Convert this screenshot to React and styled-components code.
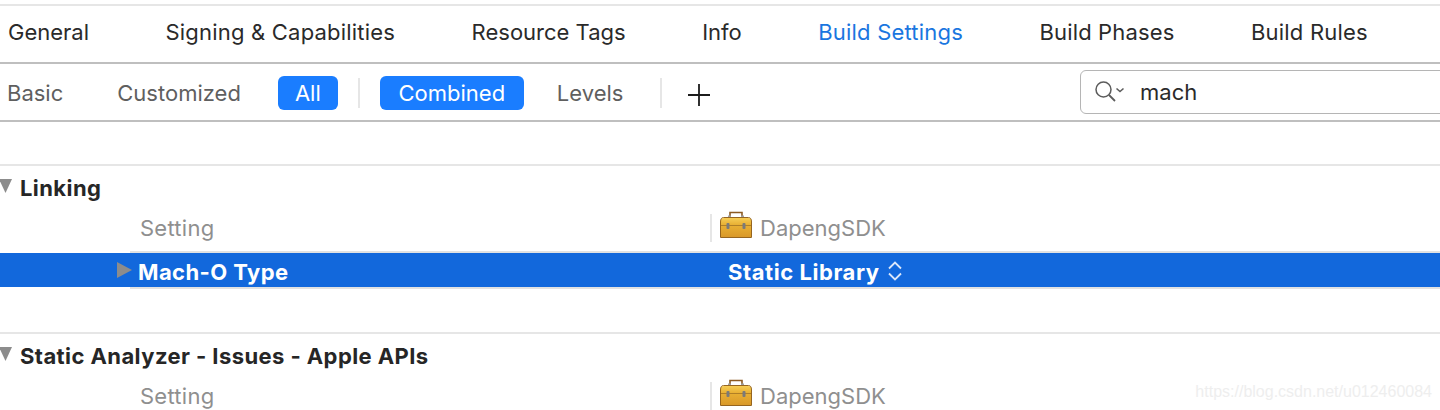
import React from "react";
import styled, { createGlobalStyle } from "styled-components";

const GlobalStyle = createGlobalStyle`
  html, body {
    margin: 0;
    padding: 0;
    background: #fff;
    overflow: hidden;
  }
  body {
    font-family: Inter, "Liberation Sans", sans-serif;
    color: #262626;
  }
`;

const Page = styled.div`
  position: relative;
  width: 1440px;
  height: 410px;
  overflow: hidden;
  background: #fff;
  padding-top: 4px;
  box-sizing: border-box;
`;

const TabBar = styled.div`
  display: flex;
  align-items: center;
  gap: 76.5px;
  height: 56px;
  padding-left: 8px;
  border-top: 2px solid #e6e6e6;
  border-bottom: 2px solid #bfbfbf;
  font-size: 22px;
  white-space: nowrap;
`;

const Tab = styled.div`
  color: ${props => (props.$active ? "#1a76e0" : "#2a2a2a")};
  letter-spacing: ${props => props.$spacing}px;
  margin-top: -5px;
`;

const FilterBar = styled.div`
  display: flex;
  align-items: center;
  height: 56px;
  padding: 2px 0 0 7px;
  box-sizing: border-box;
  font-size: 22px;
  white-space: nowrap;
`;

const FilterRule = styled.div`
  height: 2px;
  background: #bfbfbf;
`;

const FilterText = styled.div`
  color: #5f5f5f;
  margin-left: ${props => props.$left || 0}px;
`;

const Pill = styled.div`
  display: flex;
  align-items: center;
  justify-content: center;
  width: ${props => props.$width}px;
  height: 34px;
  margin-left: ${props => props.$left}px;
  border-radius: 6px;
  background: #1a7dff;
  color: #fff;
`;

const Separator = styled.div`
  width: 2px;
  height: 30px;
  margin-left: ${props => props.$left}px;
  background: #e6e6e6;
`;

const PlusIcon = styled.svg`
  width: 22px;
  height: 22px;
  margin-left: 26px;
  margin-top: 4px;
`;

const SearchBox = styled.div`
  display: flex;
  align-items: center;
  width: 380px;
  height: 44px;
  margin-left: auto;
  margin-right: -20px;
  margin-top: -2px;
  padding-left: 13px;
  box-sizing: border-box;
  border: 1px solid #b5b5b5;
  border-radius: 6px;
  color: #2a2a2a;
`;

const SearchIcon = styled.svg`
  width: 32px;
  height: 24px;
  margin-right: 14px;
`;

const Section = styled.section`
  margin-top: ${props => props.$top}px;
  border-top: 2px solid #e6e6e6;
`;

const SectionHead = styled.div`
  display: flex;
  align-items: center;
  height: 44px;
  font-size: 22px;
  font-weight: 700;
  letter-spacing: 0.42px;
  color: #262626;
  white-space: nowrap;
`;

const Disclosure = styled.svg`
  width: 13px;
  height: 14px;
  margin-left: -1px;
  margin-right: 8px;
  margin-top: -4px;
`;

const ColumnRow = styled.div`
  display: flex;
  align-items: center;
  height: 44px;
  padding-bottom: 8px;
  box-sizing: border-box;
  font-size: 22px;
  color: #8f8f8f;
  white-space: nowrap;
`;

const NameCell = styled.div`
  width: 569px;
  padding-left: 140px;
  letter-spacing: 0.25px;
`;

const ColumnDivider = styled.div`
  width: 2px;
  height: 28px;
  margin-left: 1px;
  background: #e6e6e6;
`;

const Toolbox = styled.svg`
  width: 32px;
  height: 27px;
  margin-left: 8px;
  margin-top: -7px;
`;

const TargetName = styled.div`
  margin-left: 8px;
`;

const SelectedRow = styled.div`
  position: relative;
  display: flex;
  align-items: center;
  height: 34px;
  padding-top: 4px;
  box-sizing: border-box;
  background: #1268dc;
  color: #fff;
  font-size: 22px;
  font-weight: 700;
  letter-spacing: 0.42px;
  white-space: nowrap;
  margin-top: -1px;
  &::before,
  &::after {
    content: "";
    position: absolute;
    left: 130px;
    right: 0;
    height: 2px;
    background: #e2e2e2;
  }
  &::before {
    top: -2px;
  }
  &::after {
    bottom: -2px;
  }
`;

const RowArrow = styled.svg`
  width: 15px;
  height: 16px;
  margin-left: 117px;
  margin-right: 6px;
  margin-top: -4px;
`;

const SettingName = styled.div`
  width: 590px;
`;

const SettingValue = styled.div`
  letter-spacing: 0.56px;
`;

const Stepper = styled.svg`
  width: 14px;
  height: 22px;
  margin-left: 8px;
  margin-top: -3px;
`;

const Watermark = styled.div`
  position: absolute;
  right: 8px;
  bottom: 9px;
  font-family: "Liberation Sans", sans-serif;
  font-size: 16px;
  color: #eeeeee;
`;

const tabs = [
  { label: "General", spacing: 0 },
  { label: "Signing & Capabilities", spacing: 0.2 },
  { label: "Resource Tags", spacing: 0 },
  { label: "Info", spacing: 0 },
  { label: "Build Settings", spacing: 0.2, active: true },
  { label: "Build Phases", spacing: 0.15 },
  { label: "Build Rules", spacing: 0.2 },
];

function DownTriangle() {
  return (
    <Disclosure viewBox="0 0 13 14">
      <path d="M0 0h13L6.500 14z" fill="#8c8c8c" />
    </Disclosure>
  );
}

function ToolboxIcon() {
  return (
    <Toolbox viewBox="0 0 32 27">
      <defs>
        <linearGradient id="lid" x1="0" y1="0" x2="0" y2="1">
          <stop offset="0" stopColor="#f6cd55" />
          <stop offset="1" stopColor="#e6ab2e" />
        </linearGradient>
        <linearGradient id="tray" x1="0" y1="0" x2="0" y2="1">
          <stop offset="0" stopColor="#e8af33" />
          <stop offset="1" stopColor="#d9992a" />
        </linearGradient>
      </defs>
      <path d="M10 7V1.500h12V7" fill="none" stroke="#8c5a22" strokeWidth="1.600" />
      <rect x="8" y="4.500" width="3" height="3" fill="#a0a0a0" />
      <rect x="21" y="4.500" width="3" height="3" fill="#a0a0a0" />
      <path d="M3.500 7h25q3 0 3 4v4H.5v-4q0-4 3-4z" fill="url(#lid)" />
      <path d="M.5 14.500h31V26H.5z" fill="url(#tray)" />
      <path d="M3.500 6.500h25q3 0 3 4.500v15.500H.5V11q0-4.500 3-4.500z" fill="none" stroke="#96651f" strokeWidth="1" />
      <path d="M1 14.500h30" stroke="#b07f26" strokeWidth="1" />
      <rect x="6.500" y="12" width="3" height="6" rx="1" fill="#7a7a7a" />
      <rect x="22.500" y="12" width="3" height="6" rx="1" fill="#7a7a7a" />
    </Toolbox>
  );
}

function ColumnHeader() {
  return (
    <ColumnRow>
      <NameCell>Setting</NameCell>
      <ColumnDivider />
      <ToolboxIcon />
      <TargetName>DapengSDK</TargetName>
    </ColumnRow>
  );
}

export default function App() {
  return (
    <Page>
      <GlobalStyle />
      <TabBar>
        {tabs.map(tab => (
          <Tab key={tab.label} $active={tab.active} $spacing={tab.spacing}>{tab.label}</Tab>
        ))}
      </TabBar>
      <FilterBar>
        <FilterText>Basic</FilterText>
        <FilterText $left={54}>Customized</FilterText>
        <Pill $width={60} $left={37}>All</Pill>
        <Separator $left={20} />
        <Pill $width={144} $left={20}>Combined</Pill>
        <FilterText $left={33}>Levels</FilterText>
        <Separator $left={37} />
        <PlusIcon viewBox="0 0 22 22">
          <path d="M0 11h22M11 0v22" stroke="#1c1c1c" strokeWidth="1.800" />
        </PlusIcon>
        <SearchBox>
          <SearchIcon viewBox="0 0 32 24">
            <circle cx="9.500" cy="9.500" r="7.500" fill="none" stroke="#5c5c5c" strokeWidth="1.500" />
            <path d="M15 15l6 6" stroke="#5c5c5c" strokeWidth="1.800" />
            <path d="M22.500 8.500l3.500 3 3.500-3" fill="none" stroke="#5c5c5c" strokeWidth="1.600" />
          </SearchIcon>
          mach
        </SearchBox>
      </FilterBar>
      <FilterRule />
      <Section $top={42}>
        <SectionHead>
          <DownTriangle />
          Linking
        </SectionHead>
        <ColumnHeader />
        <SelectedRow>
          <RowArrow viewBox="0 0 15 16">
            <path d="M0 0l15 8-15 8z" fill="#8c8c8c" />
          </RowArrow>
          <SettingName>Mach-O Type</SettingName>
          <SettingValue>Static Library</SettingValue>
          <Stepper viewBox="0 0 14 22">
            <path d="M1 8.500l6-6 6 6M1 13.500l6 6 6-6" fill="none" stroke="#dbe7fa" strokeWidth="1.800" />
          </Stepper>
        </SelectedRow>
      </Section>
      <Section $top={45}>
        <SectionHead>
          <DownTriangle />
          Static Analyzer - Issues - Apple APIs
        </SectionHead>
        <ColumnHeader />
      </Section>
      <Watermark>https://blog.csdn.net/u012460084</Watermark>
    </Page>
  );
}
